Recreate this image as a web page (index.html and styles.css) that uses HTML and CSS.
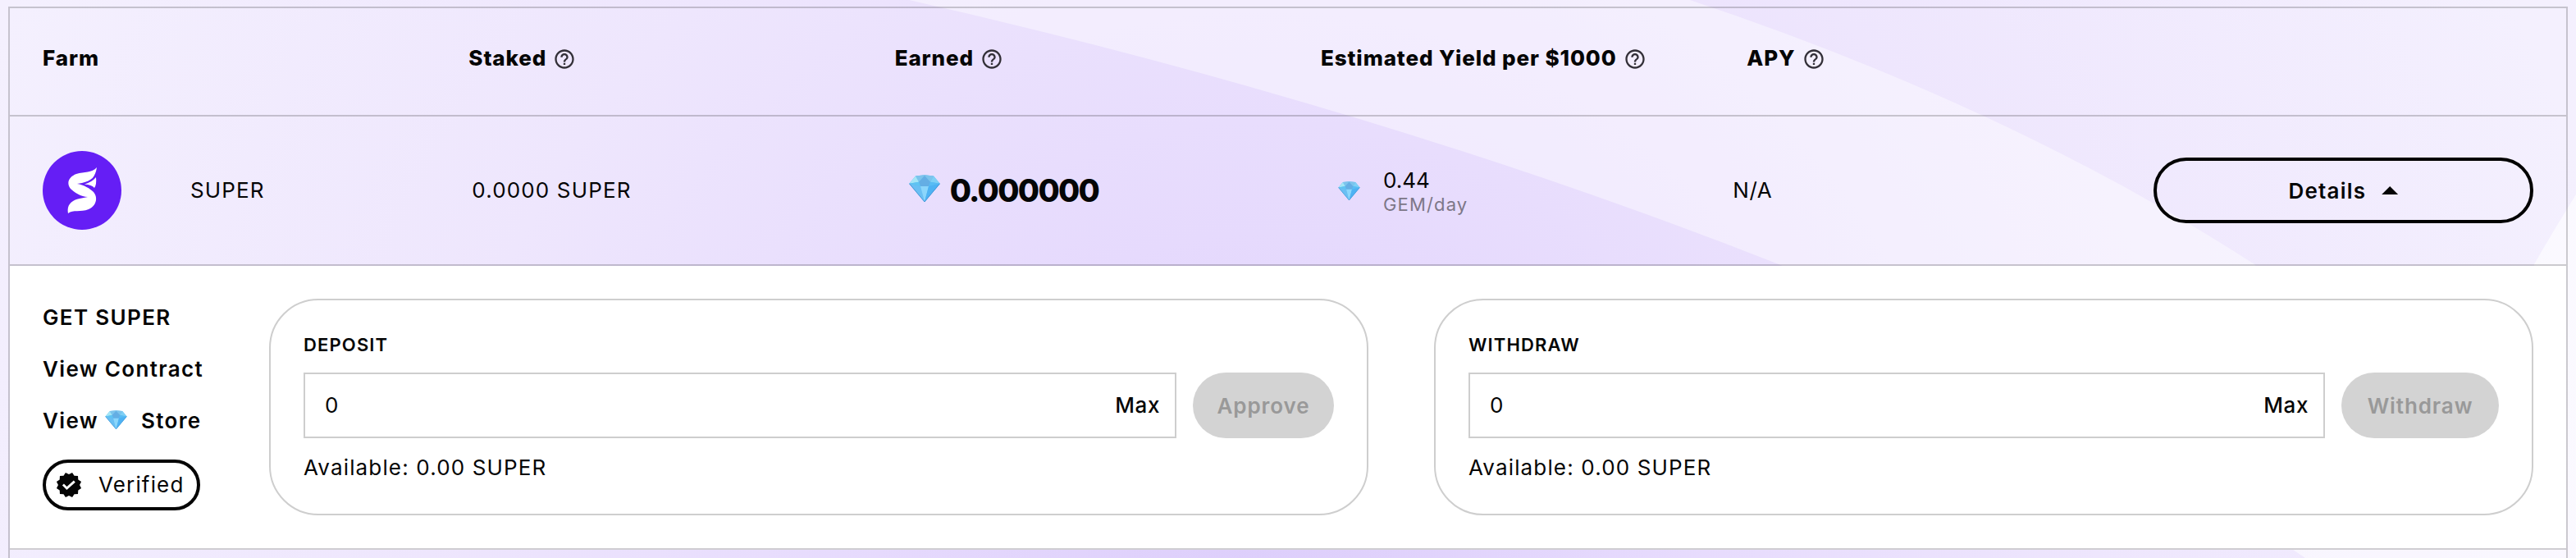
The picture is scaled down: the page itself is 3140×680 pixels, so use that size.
FILE: index.html
```
<!DOCTYPE html>
<html lang="en">
<head>
    <meta charset="UTF-8">
    <meta name="viewport" content="width=device-width, initial-scale=1.0">
    <title>Farms</title>
    <link rel="stylesheet" href="styles.css">
</head>
<body>

    <!-- shared icons -->
    <svg class="defs" width="0" height="0" aria-hidden="true">
        <symbol id="help" viewBox="0 0 24 24">
            <path d="M11 18h2v-2h-2v2zm1-16C6.48 2 2 6.48 2 12s4.48 10 10 10 10-4.48 10-10S17.52 2 12 2zm0 18c-4.41 0-8-3.59-8-8s3.59-8 8-8 8 3.59 8 8-3.59 8-8 8zm0-14c-2.21 0-4 1.79-4 4h2c0-1.1.9-2 2-2s2 .9 2 2c0 2-3 1.75-3 5h2c0-2.25 3-2.5 3-5 0-2.21-1.79-4-4-4z"/>
        </symbol>
        <symbol id="gem" viewBox="0 0 38 33">
            <path d="M8 1.5 19 .3l11 1.2 7.700 9.200L19 33 .3 10.700z" fill="#58b9f2"/>
            <path d="M8 1.5 19 .3l11 1.200-4 7.200H12z" fill="#7cc4ec"/>
            <path d="M8 1.500 12 8.700.3 10.700z" fill="#a4e6f6"/>
            <path d="M30 1.500l7.700 9.200L26 8.700z" fill="#7fd0f5"/>
            <path d="M19 1 26 8.700 24 14H14l-2-5.300z" fill="#64aee4"/>
            <path d="M.3 10.700 12 8.700l2 5.300z" fill="#5ec4f2"/>
            <path d="M37.700 10.700 26 8.700 24 14z" fill="#58bcf4"/>
            <path d="M.3 10.700 14 14l5 19z" fill="#69bff3"/>
            <path d="M14 14h10l-5 19z" fill="#8bd6fb"/>
            <path d="M24 14l13.700-3.300L19 33z" fill="#4eb2f3"/>
            <path d="M.3 10.700 19 33l18.700-22.300" fill="none" stroke="#3a8fd0" stroke-width=".8"/>
        </symbol>
    </svg>

    <svg class="backdrop" viewBox="0 0 3140 680" preserveAspectRatio="none" aria-hidden="true">
        <defs>
            <radialGradient id="glow" gradientUnits="userSpaceOnUse" cx="1540" cy="760" r="1700">
                <stop offset="0" stop-color="#dccdfb"/>
                <stop offset=".28" stop-color="#e6dafd"/>
                <stop offset=".6" stop-color="#eee6fd"/>
                <stop offset="1" stop-color="#f4f0fe"/>
            </radialGradient>
        </defs>
        <rect width="3140" height="680" fill="url(#glow)"/>
        <path d="M1108 0Q1680 130 2168 322L2300 380H2800L2748 322Q2450 130 2060 0z" fill="#fff" fill-opacity=".42"/>
        <path d="M2780 660h360v20h-330z" fill="#fff" fill-opacity=".55"/>
        <path d="M3140 237Q3112 282 3089 322v338h51z" fill="#fff" fill-opacity=".6"/>
    </svg>

    <div class="farms">
        <div class="row head">
            <div class="cell">Farm</div>
            <div class="cell">Staked <svg class="help"><use href="#help"/></svg></div>
            <div class="cell">Earned <svg class="help"><use href="#help"/></svg></div>
            <div class="cell">Estimated Yield per $1000 <svg class="help"><use href="#help"/></svg></div>
            <div class="cell">APY <svg class="help"><use href="#help"/></svg></div>
            <div class="cell"></div>
        </div>

        <div class="row farm">
            <div class="cell token">
                <svg class="logo" viewBox="0 0 96 96">
                    <circle cx="48" cy="48" r="48" fill="#651ef5"/>
                    <path d="M66 20C64 32 60 36 48 39L42 40C50 41 58 46 62 50C68 57 65 67 56 71C46 75 37 71 31 76C29 66 35 60 45 58L55 56C47 56 38 50 34 46C28 38 33 31 41 28C51 25 60 27 66 20z" fill="#fff"/>
                    <path d="M65 32Q66 41 63 45Q60 41 51 40.500Q60 38 65 32z" fill="#fff"/>
                </svg>
                <span class="token-name">SUPER</span>
            </div>
            <div class="cell staked">0.0000 SUPER</div>
            <div class="cell earned"><svg class="gem"><use href="#gem"/></svg><strong>0.000000</strong></div>
            <div class="cell yield">
                <svg class="gem small"><use href="#gem"/></svg>
                <div class="rate">
                    <div class="rate-value">0.44</div>
                    <div class="rate-unit">GEM/day</div>
                </div>
            </div>
            <div class="cell apy">N/A</div>
            <div class="cell action">
                <button class="details">Details <span class="caret"></span></button>
            </div>
        </div>

        <div class="panel">
            <div class="links">
                <a class="link">GET SUPER</a>
                <a class="link">View Contract</a>
                <a class="link">View<svg class="gem small"><use href="#gem"/></svg>Store</a>
                <div class="verified">
                    <svg class="badge" viewBox="0 0 24 24">
                        <path d="M12 2.800L14.850 1.370 16.600 4.030 19.780 4.220 19.970 7.400 22.630 9.150 21.200 12 22.630 14.850 19.970 16.600 19.780 19.780 16.600 19.970 14.850 22.630 12 21.200 9.150 22.630 7.400 19.970 4.220 19.780 4.030 16.600 1.370 14.850 2.800 12 1.370 9.150 4.030 7.400 4.220 4.220 7.400 4.030 9.150 1.370z" fill="#050505"/>
                        <path d="M7 11.700l3.200 3.200 6.600-6" fill="none" stroke="#fff" stroke-width="2"/>
                    </svg>
                    <span>Verified</span>
                </div>
            </div>

            <div class="card deposit">
                <div class="card-title">DEPOSIT</div>
                <div class="form">
                    <div class="amount"><span>0</span><span class="max">Max</span></div>
                    <button class="submit" disabled>Approve</button>
                </div>
                <div class="available">Available: 0.00 SUPER</div>
            </div>

            <div class="card withdraw">
                <div class="card-title">WITHDRAW</div>
                <div class="form">
                    <div class="amount"><span>0</span><span class="max">Max</span></div>
                    <button class="submit" disabled>Withdraw</button>
                </div>
                <div class="available">Available: 0.00 SUPER</div>
            </div>
        </div>
    </div>

</body>
</html>
```
FILE: styles.css
```
* {
    box-sizing: border-box;
    margin: 0;
    padding: 0;
}

body {
    height: 680px;
    overflow: hidden;
    padding: 8px 10px 0;
    font-family: Inter, "Liberation Sans", sans-serif;
    font-size: 26px;
    line-height: 32px;
    letter-spacing: 1.15px;
    color: #050505;
    background: #f3eefe;
}

.defs {
    position: absolute;
}

/* page background with light bands, sits behind the table */
.backdrop {
    position: absolute;
    top: 0;
    left: 0;
    width: 3140px;
    height: 680px;
    z-index: -1;
}

.farms {
    height: 700px;
    border: 2px solid rgba(0, 0, 0, 0.19);
}

.row {
    display: grid;
    grid-template-columns: repeat(6, 1fr);
    border-bottom: 2px solid rgba(0, 0, 0, 0.19);
}

.cell {
    display: flex;
    align-items: center;
    padding-left: 40px;
}

.head {
    height: 132px;
    padding-bottom: 8px;
    font-weight: 800;
    letter-spacing: 0.9px;
}

.help {
    width: 28px;
    height: 28px;
    margin: 2px 0 0 8px;
    fill: #333038;
}

.farm {
    height: 182px;
}

.logo {
    width: 96px;
    height: 96px;
    margin-right: 84px;
}

.staked {
    padding-left: 44px;
}

.earned {
    padding-left: 57px;
}

.earned .gem {
    margin-bottom: 6px;
}

.earned strong {
    font-size: 38px;
    font-weight: 800;
    letter-spacing: -1.7px;
    margin-left: 12px;
}

.gem {
    width: 38px;
    height: 33px;
}

.gem.small {
    width: 27px;
    height: 23px;
}

.yield {
    padding-left: 61px;
}

.rate {
    margin: 4px 0 0 28px;
}

.rate-value {
    line-height: 30px;
    letter-spacing: 0;
}

.rate-unit {
    font-size: 22px;
    line-height: 28px;
    color: #7d7787;
}

.apy {
    padding-left: 23px;
    letter-spacing: 0.5px;
}

.action {
    padding: 0 40px 0 16px;
}

button {
    font-family: inherit;
    font-size: 26px;
    font-weight: 600;
    letter-spacing: 0.9px;
    border: none;
    border-radius: 40px;
}

.details {
    display: flex;
    align-items: center;
    justify-content: center;
    width: 100%;
    height: 80px;
    background: transparent;
    border: 4px solid #000;
    color: #050505;
    letter-spacing: 1.2px;
}

.caret {
    width: 20px;
    height: 10px;
    margin-left: 19px;
    background: #050505;
    clip-path: polygon(50% 0, 100% 100%, 0 100%);
}

.panel {
    display: flex;
    height: 346px;
    padding: 40px;
    background: #fff;
    border-bottom: 2px solid #cfcdd2;
}

.links {
    display: flex;
    flex-direction: column;
    width: 276px;
}

.link {
    display: flex;
    align-items: center;
    height: 32px;
    margin: 7px 0 24px;
    font-weight: 600;
    letter-spacing: 1.35px;
}

.link .gem {
    margin: 0 17px 3px 8px;
}

.verified {
    display: flex;
    align-items: center;
    width: 192px;
    height: 62px;
    margin-top: 7px;
    padding-left: 11px;
    border: 4px solid #050505;
    border-radius: 31px;
}

.badge {
    width: 34px;
    height: 34px;
    margin-right: 19px;
}

.card {
    width: 1340px;
    height: 264px;
    padding: 38px 40px;
    border: 2px solid #cecece;
    border-radius: 60px;
}

.withdraw {
    margin-left: 80px;
}

.card-title {
    font-size: 22px;
    font-weight: 600;
    line-height: 32px;
    margin-bottom: 18px;
}

.form {
    display: flex;
    gap: 20px;
}

.amount {
    display: flex;
    flex: 1;
    align-items: center;
    justify-content: space-between;
    height: 80px;
    padding: 0 18px 0 24px;
    border: 2px solid #cecece;
}

.max {
    font-weight: 500;
    letter-spacing: 0.6px;
}

.submit {
    width: 172px;
    height: 80px;
    background: #d3d3d3;
    color: #999;
}

.withdraw .submit {
    width: 192px;
}

.available {
    margin-top: 20px;
}
```
